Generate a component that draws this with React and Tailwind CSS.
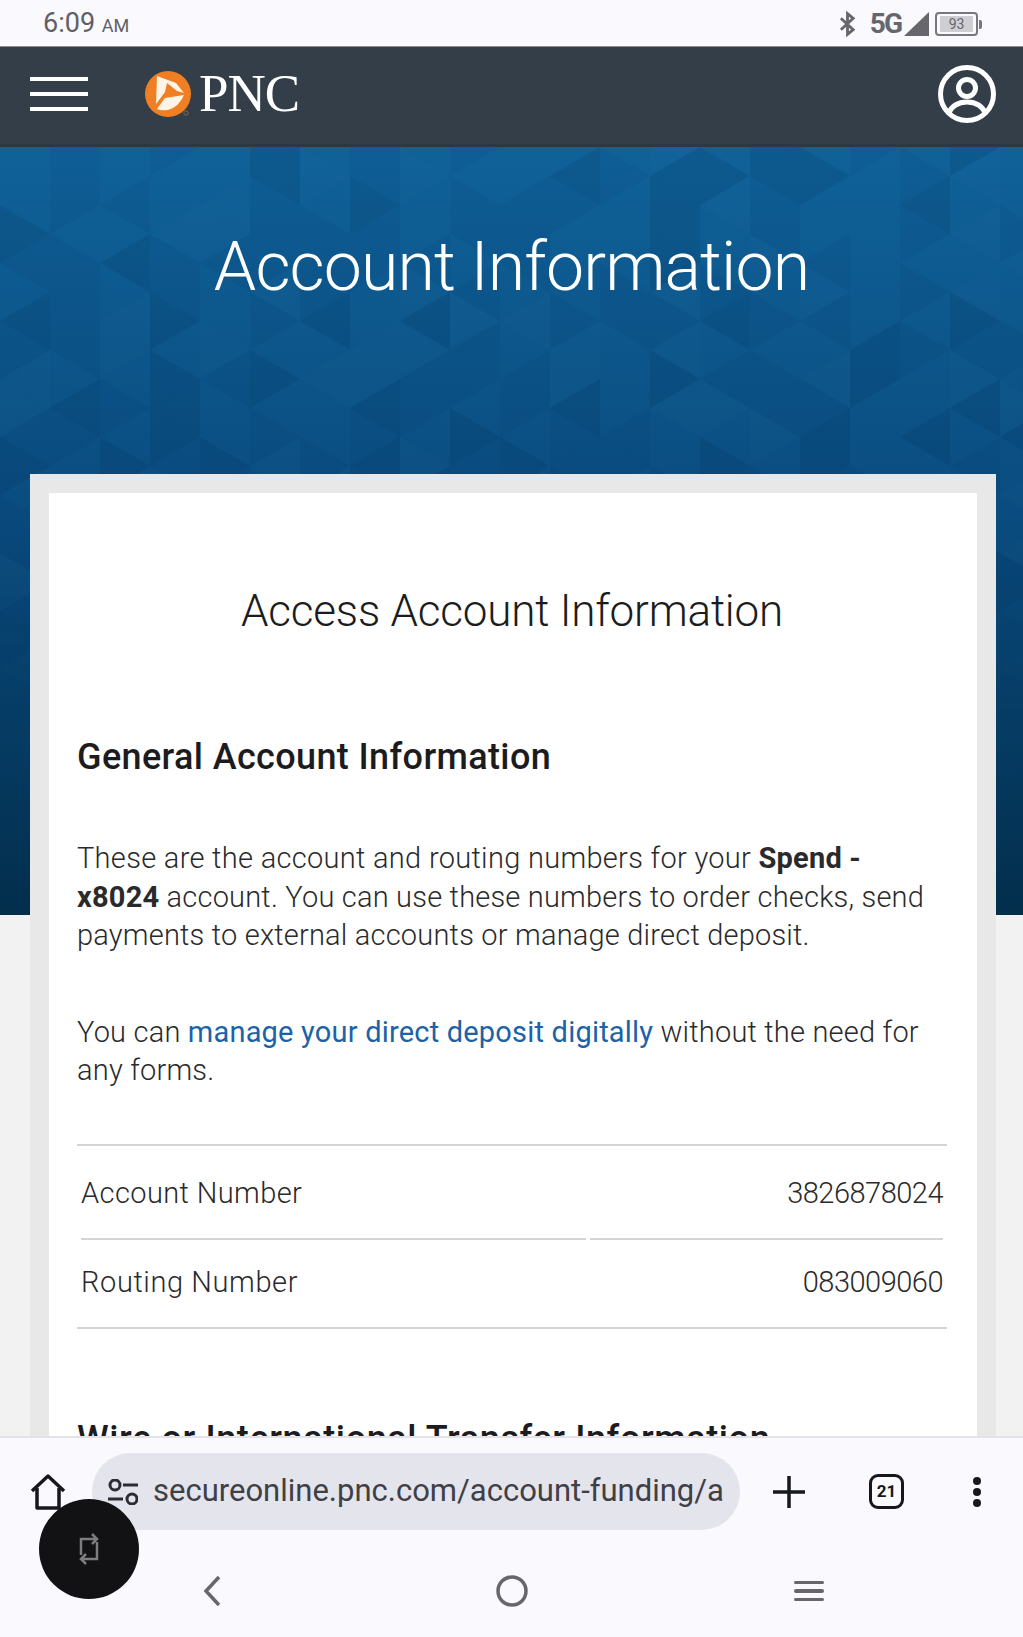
import React from 'react';

const din = "font-['Roboto','Liberation_Sans',sans-serif]";

// faint triangle tiling behind the hero, seeded so it stays the same each render
const buildTriangles = () => {
  const out = [];
  let seed = 17;
  const next = () => {
    seed = (seed * 9301 + 49297) % 233280;
    return seed / 233280;
  };
  const w = 50;
  const h = 29;
  for (let c = 0; c < 22; c++) {
    for (let r = 0; r < 20; r++) {
      const x = c * w;
      const y = r * h * 2 - (c % 2 ? h : 0);
      const tris = [
        `${x},${y} ${x + w},${y + h} ${x},${y + h * 2}`,
        `${x + w},${y + h} ${x},${y + h * 2} ${x + w},${y + h * 3}`,
      ];
      tris.forEach((points) => {
        const v = next();
        if (v < 0.15) out.push({ points, fill: '#00284f', opacity: 0.13 });
        else if (v < 0.45) out.push({ points, fill: '#00284f', opacity: 0.06 });
        else if (v < 0.65) out.push({ points, fill: '#ffffff', opacity: 0.012 });
      });
    }
  }
  return out;
};

const triangles = buildTriangles();

const HeroPattern = () => (
  <svg
    className="absolute inset-0 h-full w-full [mask-image:linear-gradient(to_bottom,black_55%,transparent_75%)]"
    viewBox="0 0 1023 768"
    preserveAspectRatio="none"
  >
    {triangles.map((t, i) => (
      <polygon key={i} points={t.points} fill={t.fill} opacity={t.opacity} />
    ))}
  </svg>
);

const Logo = () => (
  <svg className="overflow-visible" width="46" height="46" viewBox="0 0 46 46">
    <circle cx="23" cy="23" r="23" fill="#ef7f22" />
    <path d="M12 5 L31 12 L39 22 L32 20 L22 12 L20 21 L11 33 Z" fill="#fff4e6" />
    <path d="M12 38 L20 27 L39 24 Q34 36 23 39 Q16 40 12 38 Z" fill="#fff4e6" />
    <circle cx="41" cy="42" r="2.2" fill="none" stroke="#8a6a3a" strokeWidth="1" />
  </svg>
);

const StatusIcons = () => (
  <div className="flex items-center pt-[2px] text-[#66666c]">
    <svg width="17" height="26" viewBox="0 0 18 26" fill="none" stroke="currentColor" strokeWidth="3">
      <path d="M2 7 L15 19 L9 24 V2 L15 7 L2 19" />
    </svg>
    <span className="ml-[14px] text-[28px] leading-none font-bold tracking-[-2px] font-['Roboto',sans-serif]">5G</span>
    <svg className="ml-[3px]" width="25" height="24" viewBox="0 0 25 24">
      <path d="M25 0 V24 H0 Z" fill="currentColor" />
    </svg>
    <div className="relative ml-[6px] flex h-[24px] w-[43px] items-center justify-center rounded-[4px] border-2 border-[#77777d]">
      <div className="flex h-[16px] w-[33px] items-center justify-center rounded-[1px] bg-[#cfcfd3] text-[14px] text-[#66666c] font-['Roboto',sans-serif]">93</div>
      <span className="absolute right-[-6px] top-[6px] h-[9px] w-[3px] rounded-r-[2px] bg-[#77777d]" />
    </div>
  </div>
);

export default function App() {
  return (
    <div className={`relative flex h-[1637px] w-[1023px] flex-col overflow-hidden bg-[#f2f2f2] ${din}`}>
      {/* Status bar */}
      <div className="flex h-[47px] shrink-0 items-center justify-between border-b border-[#8a8d92] bg-[#f9f9fe] pl-[43px] pr-[45px]">
        <div className="pt-[1px] text-[27px] leading-none text-[#5f6066]">
          6:09 <span className="text-[18px]">AM</span>
        </div>
        <StatusIcons />
      </div>

      {/* Header */}
      <div className="flex h-[100px] shrink-0 items-center justify-between border-b-[3px] border-[#2e3841] bg-[#333e48] pb-[4px] pl-[30px] pr-[27px]">
        <div className="flex items-center">
          <div className="flex w-[58px] flex-col gap-[11px]">
            <span className="h-[4px] bg-white" />
            <span className="h-[4px] bg-white" />
            <span className="h-[4px] bg-white" />
          </div>
          <div className="ml-[57px]"><Logo /></div>
          <span className="ml-[8px] text-[53px] leading-none tracking-[-1px] text-white font-['Liberation_Serif',serif]">PNC</span>
        </div>
        <svg width="58" height="58" viewBox="0 0 58 58" fill="none" stroke="#fff" strokeWidth="5">
          <circle cx="29" cy="29" r="26.5" />
          <circle cx="29" cy="23" r="8.5" />
          <path d="M10 49 C14 40 22 37 29 37 C36 37 44 40 48 49" />
        </svg>
      </div>

      {/* Scrolling page */}
      <div className="relative min-h-0 flex-1 overflow-hidden">
        <div className="relative h-[768px] bg-gradient-to-b from-[#0f6299] via-[#0a4b7e] to-[#032e4c]">
          <HeroPattern />
          <h1 className="relative pt-[72px] text-center text-[68px] font-light leading-[96px] tracking-[-0.9px] text-white">
            Account Information
          </h1>
        </div>

        <div className="relative ml-[30px] mt-[-441px] w-[966px] border-[19px] border-[#e8e8e8] bg-white pl-[28px] pr-[30px] text-[#2a2a2c]">
          <h2 className="pt-[89px] text-center text-[44px] font-light leading-[58px] tracking-[-0.2px] text-[#1c1c1e]">
            Access Account Information
          </h2>
          <h3 className="mt-[95px] text-[36px] font-medium leading-[44px] tracking-[0.37px] text-[#1c1c1e]">
            General Account Information
          </h3>
          <p className="mt-[60px] text-[29px] font-light leading-[38.5px] tracking-[0.2px]">
            <span className="tracking-[0.3px]">These are the account and routing numbers for your </span><strong className="font-bold">Spend -<br />x8024</strong> account. You can use these numbers to order checks, send<br />payments to external accounts or manage direct deposit.
          </p>
          <p className="mt-[58px] text-[29px] font-light leading-[38.5px] tracking-[0.2px]">
            You can <a className="font-normal text-[#1b62a8]">manage your direct deposit digitally</a> without the need for<br />any forms.
          </p>

          <div className="mt-[54px] border-y-2 border-[#d4d4d4] text-[29px] font-light">
            <div className="mx-[4px] flex h-[92px] items-center justify-between pt-[5px]">
              <span className="tracking-[0.4px]">Account Number</span>
              <span className="tracking-[-0.5px]">3826878024</span>
            </div>
            <div className="mx-[4px] flex gap-[4px]">
              <span className="h-[2px] w-[505px] bg-[#d4d4d4]" />
              <span className="h-[2px] flex-1 bg-[#d4d4d4]" />
            </div>
            <div className="mx-[4px] flex h-[87px] items-center justify-between">
              <span className="tracking-[0.6px]">Routing Number</span>
              <span className="tracking-[-0.5px]">083009060</span>
            </div>
          </div>

          <h3 className="mt-[88px] pb-[40px] text-[36px] font-medium leading-[44px] tracking-[0.6px] text-[#1c1c1e]">
            Wire or International Transfer Information
          </h3>
        </div>
      </div>

      {/* Browser toolbar and system nav */}
      <div className="h-[201px] shrink-0 border-t-2 border-[#e2e2e8] bg-[#f9f9fe]">
        <div className="flex h-[107px] items-center pl-[30px]">
          <svg width="36" height="36" viewBox="0 0 36 36" fill="none" stroke="#17181c" strokeWidth="3.5" strokeLinejoin="round">
            <path d="M2 17 L18 2 L34 17 M7 14 V34 H29 V14" />
          </svg>
          <div className="ml-[26px] flex h-[77px] w-[648px] items-center overflow-hidden rounded-full bg-[#e4e4ec] pl-[16px] pr-[15px] text-[31px] text-[#3f4046]">
            <svg className="shrink-0" width="30" height="26" viewBox="0 0 30 26" fill="none" stroke="#2c2d33" strokeWidth="3">
              <circle cx="7" cy="6" r="5" />
              <path d="M15 6 H30 M0 20 H15" />
              <circle cx="24" cy="20" r="5" />
            </svg>
            <span className="ml-[15px] overflow-hidden whitespace-nowrap">secureonline.pnc.com/account-funding/a</span>
          </div>
          <svg className="ml-[33px]" width="32" height="32" viewBox="0 0 32 32" fill="none" stroke="#17181c" strokeWidth="3.5">
            <path d="M0 16 H32 M16 0 V32" />
          </svg>
          <div className="ml-[64px] flex h-[35px] w-[35px] items-center justify-center rounded-[9px] border-[3.5px] border-[#17181c] text-[17px] font-bold text-[#17181c]">21</div>
          <div className="ml-[69px] flex flex-col gap-[3px]">
            <span className="h-[8px] w-[8px] rounded-full bg-[#17181c]" />
            <span className="h-[8px] w-[8px] rounded-full bg-[#17181c]" />
            <span className="h-[8px] w-[8px] rounded-full bg-[#17181c]" />
          </div>
        </div>
        <div className="flex items-center pt-[30px]">
          <svg className="ml-[203px]" width="18" height="32" viewBox="0 0 18 32" fill="none" stroke="#66666c" strokeWidth="3.5">
            <path d="M16 2 L3 16 L16 30" />
          </svg>
          <svg className="ml-[275px]" width="32" height="32" viewBox="0 0 32 32" fill="none" stroke="#66666c" strokeWidth="3.5">
            <circle cx="16" cy="16" r="14" />
          </svg>
          <div className="ml-[266px] flex w-[30px] flex-col gap-[5px]">
            <span className="h-[3.5px] rounded-full bg-[#66666c]" />
            <span className="h-[3.5px] rounded-full bg-[#66666c]" />
            <span className="h-[3.5px] rounded-full bg-[#66666c]" />
          </div>
        </div>
      </div>

      {/* Floating assistant button */}
      <div className="absolute left-[39px] top-[1499px] flex h-[100px] w-[100px] items-center justify-center rounded-full bg-[#121214]">
        <svg width="20" height="34" viewBox="0 0 20 34" fill="none" stroke="#7d7d80" strokeWidth="2.5">
          <path d="M17 7 H2 V23 M13 2 L18 7 L13 12 M3 27 H18 V10 M7 22 L2 27 L7 32" />
        </svg>
      </div>
    </div>
  );
}
